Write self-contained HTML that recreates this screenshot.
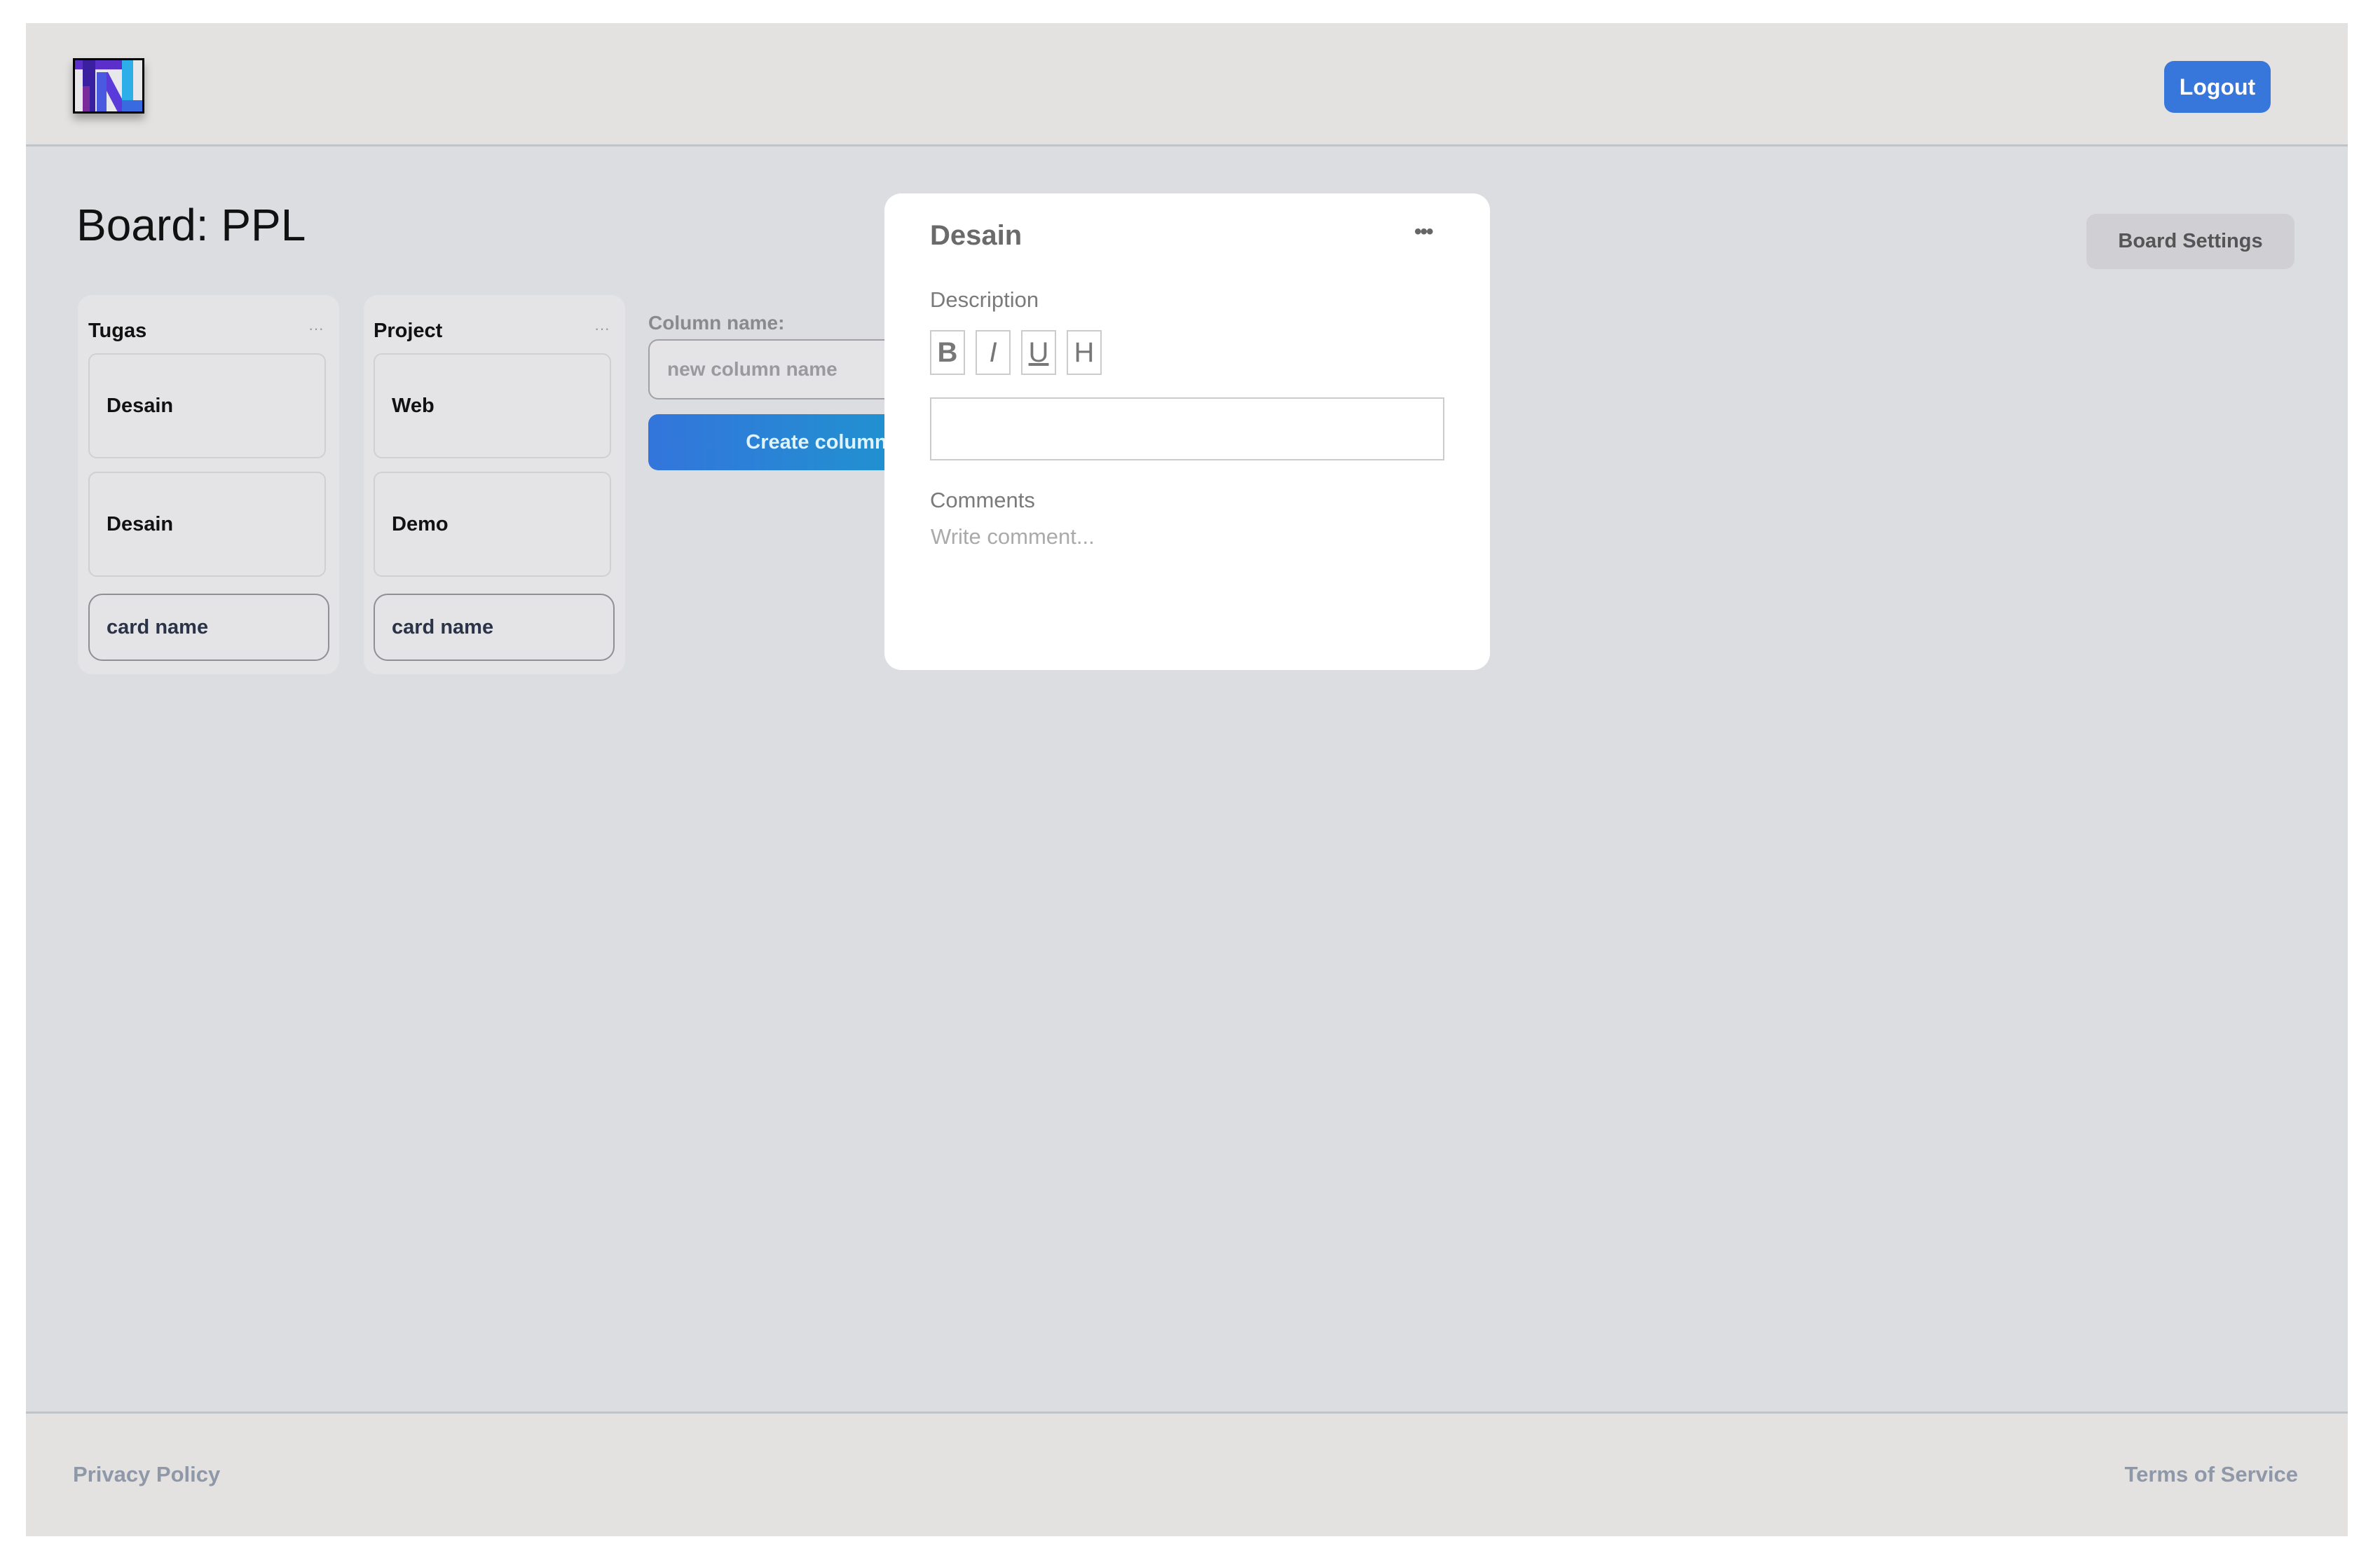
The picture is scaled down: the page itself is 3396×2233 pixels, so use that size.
<!DOCTYPE html>
<html><head><meta charset="utf-8"><style>
*{box-sizing:border-box;margin:0;padding:0}
body{width:3396px;height:2233px;background:#fff;font-family:"Liberation Sans",sans-serif;position:relative;overflow:hidden}
.a{position:absolute}
.frame{left:37px;top:33px;width:3313px;height:2159px;background:#dcdde1}
.hdr{left:37px;top:33px;width:3313px;height:176px;background:#e3e2e0;border-bottom:3px solid #bfc3ca}
.ftr{left:37px;top:2014px;width:3313px;height:178px;background:#e3e2e0;border-top:3px solid #bfc3ca}
.col{background:#e4e4e6;border-radius:20px}
.card{background:#e4e4e6;border:2px solid #d0d0d3;border-radius:12px;font-size:29px;font-weight:bold;color:#111;padding-left:24px;display:flex;align-items:center}
.inp{border:2px solid #8f8f95;border-radius:20px;font-size:29px;font-weight:bold;color:#2a3348;padding-left:24px;display:flex;align-items:center}
.tb{width:50px;height:64px;border:2px solid #ccc;color:#777;font-size:40px;display:flex;align-items:center;justify-content:center;top:471px}
</style></head><body>
<div class="a frame"></div>
<div class="a hdr"></div>
<svg class="a" style="left:104px;top:83px;filter:drop-shadow(0 8px 6px rgba(0,0,0,.3))" width="102" height="79" viewBox="0 0 102 79">
<rect x="0" y="0" width="102" height="79" fill="#e8e8ea"/>
<rect x="2" y="2" width="68" height="14" fill="#5b2fc9"/>
<rect x="14" y="2" width="18" height="75" fill="#3a1fa0"/>
<rect x="14" y="40" width="10" height="37" fill="#7a2a9a"/>
<polygon points="34,20 50,20 80,77 64,77" fill="#5a3ad8"/>
<rect x="34" y="20" width="14" height="57" fill="#4a5ae0"/>
<rect x="70" y="2" width="16" height="75" fill="#2eaee8"/>
<rect x="70" y="60" width="30" height="17" fill="#3a6ae0"/>
<rect x="1.5" y="1.5" width="99" height="76" fill="none" stroke="#000" stroke-width="3"/>
</svg>
<div class="a" style="left:3088px;top:87px;width:152px;height:74px;background:#3777dc;border-radius:14px;color:#fff;font-size:32px;font-weight:bold;display:flex;align-items:center;justify-content:center">Logout</div>
<div class="a" style="left:109px;top:284px;font-size:64px;color:#111">Board: PPL</div>
<div class="a" style="left:2977px;top:305px;width:297px;height:79px;background:#cfcfd4;border-radius:14px;color:#555;font-size:29px;font-weight:bold;display:flex;align-items:center;justify-content:center">Board Settings</div>

<div class="a col" style="left:111px;top:421px;width:373px;height:541px"></div>
<div class="a" style="left:126px;top:456px;font-size:29px;font-weight:bold;color:#111">Tugas</div>
<div class="a" style="left:440px;top:456px;font-size:22px;color:#999">···</div>
<div class="a card" style="left:126px;top:504px;width:339px;height:150px">Desain</div>
<div class="a card" style="left:126px;top:673px;width:339px;height:150px">Desain</div>
<div class="a inp" style="left:126px;top:847px;width:344px;height:96px">card name</div>

<div class="a col" style="left:519px;top:421px;width:373px;height:541px"></div>
<div class="a" style="left:533px;top:456px;font-size:29px;font-weight:bold;color:#111">Project</div>
<div class="a" style="left:848px;top:456px;font-size:22px;color:#999">···</div>
<div class="a card" style="left:533px;top:504px;width:339px;height:150px">Web</div>
<div class="a card" style="left:533px;top:673px;width:339px;height:150px">Demo</div>
<div class="a inp" style="left:533px;top:847px;width:344px;height:96px">card name</div>

<div class="a" style="left:925px;top:445px;font-size:28px;font-weight:bold;color:#8a8a8e">Column name:</div>
<div class="a" style="left:925px;top:484px;width:480px;height:86px;border:2px solid #a0a0a5;border-radius:14px;background:#e4e4e6;font-size:28px;font-weight:bold;color:#9a9a9e;padding-left:25px;display:flex;align-items:center">new column name</div>
<div class="a" style="left:925px;top:591px;width:480px;height:80px;border-radius:14px;background:linear-gradient(90deg,#3375dc,#1a9ccb);font-size:29px;font-weight:bold;color:#e0f2fa;display:flex;align-items:center;justify-content:center">Create column</div>

<div class="a" style="left:1262px;top:276px;width:864px;height:680px;background:#fff;border-radius:24px"></div>
<div class="a" style="left:1327px;top:314px;font-size:40px;font-weight:bold;color:#6a6a6a">Desain</div>
<div class="a" style="left:2018px;top:314px;font-size:30px;font-weight:bold;color:#666;letter-spacing:-2px">•••</div>
<div class="a" style="left:1327px;top:410px;font-size:31px;color:#7a7a7a">Description</div>
<div class="a tb" style="left:1327px;font-weight:bold">B</div>
<div class="a tb" style="left:1392px;font-style:italic">I</div>
<div class="a tb" style="left:1457px;text-decoration:underline">U</div>
<div class="a tb" style="left:1522px">H</div>
<div class="a" style="left:1327px;top:567px;width:734px;height:90px;border:2px solid #ccc"></div>
<div class="a" style="left:1327px;top:696px;font-size:31px;color:#7a7a7a">Comments</div>
<div class="a" style="left:1328px;top:748px;font-size:31px;color:#aaa">Write comment...</div>

<div class="a ftr"></div>
<div class="a" style="left:104px;top:2086px;font-size:31px;font-weight:bold;color:#8e98a8">Privacy Policy</div>
<div class="a" style="right:117px;top:2086px;font-size:31px;font-weight:bold;color:#8e98a8">Terms of Service</div>
</body></html>
